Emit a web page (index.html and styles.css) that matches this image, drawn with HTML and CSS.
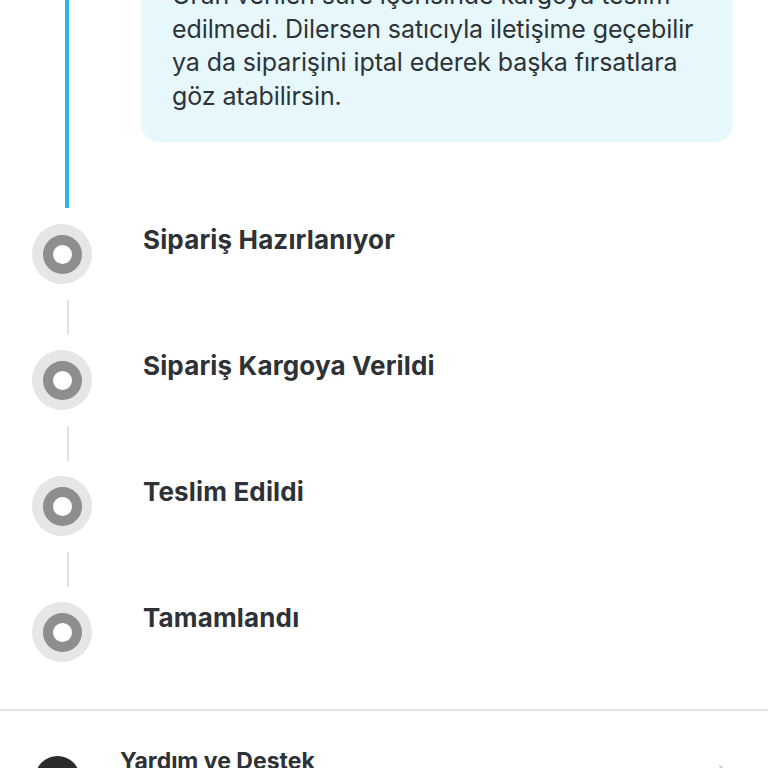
FILE: index.html
```html
<!DOCTYPE html>
<html lang="tr">
<head>
<meta charset="utf-8">
<link rel="stylesheet" href="styles.css">
</head>
<body>
<div class="page">
  <section class="active-step">
    <div class="rail"><div class="rail-line"></div></div>
    <div class="note">
      <p>Ürün verilen süre içerisinde kargoya teslim edilmedi. Dilersen satıcıyla iletişime geçebilir ya da siparişini iptal ederek başka fırsatlara göz atabilirsin.</p>
    </div>
  </section>

  <ol class="steps">
    <li class="step">
      <div class="marker"><span class="dot"></span><span class="link"></span></div>
      <div class="title">Sipariş Hazırlanıyor</div>
    </li>
    <li class="step">
      <div class="marker"><span class="dot"></span><span class="link"></span></div>
      <div class="title">Sipariş Kargoya Verildi</div>
    </li>
    <li class="step">
      <div class="marker"><span class="dot"></span><span class="link"></span></div>
      <div class="title">Teslim Edildi</div>
    </li>
    <li class="step last">
      <div class="marker"><span class="dot"></span></div>
      <div class="title">Tamamlandı</div>
    </li>
  </ol>

  <div class="divider"></div>

  <div class="help">
    <span class="help-icon"></span>
    <div class="help-title">Yardım ve Destek</div>
    <svg class="chev" width="12" height="20" viewBox="0 0 12 20"><path d="M2 2 L10 10 L2 18" fill="none" stroke="#cfcfcf" stroke-width="2" stroke-linecap="round" stroke-linejoin="round"/></svg>
  </div>
</div>
</body>
</html>
```

FILE: styles.css
```css
html, body {
  margin: 0;
  padding: 0;
  background: #ffffff;
  overflow: hidden;
}
body {
  font-family: "Inter", "Roboto", "Noto Sans", sans-serif;
  color: #2f3336;
}
.page {
  width: 768px;
  height: 768px;
  overflow: hidden;
}
.active-step {
  display: flex;
  margin-top: -39px;
}
.rail {
  width: 141px;
  flex: none;
  display: flex;
}
.rail-line {
  width: 4px;
  margin-left: 65px;
  height: 247px;
  background: #2cb7e6;
}
.note {
  width: 592px;
  height: 181px;
  box-sizing: border-box;
  background: #e6f8fc;
  border-radius: 18px;
  padding: 18px 16px 0 31px;
}
.note p {
  margin: 0;
  font-size: 25px;
  line-height: 33.5px;
  letter-spacing: -0.1px;
  color: #2e3338;
}
.steps {
  list-style: none;
  margin: 16px 0 0 0;
  padding: 0;
}
.step {
  display: flex;
  height: 126px;
}
.step.last {
  height: 107px;
}
.marker {
  width: 143px;
  flex: none;
  display: flex;
  flex-direction: column;
}
.dot {
  margin-left: 32px;
  width: 60px;
  height: 60px;
  border-radius: 50%;
  background: #e6e6e6;
  display: flex;
  align-items: center;
  justify-content: center;
}
.dot::before {
  content: "";
  width: 19px;
  height: 19px;
  border-radius: 50%;
  background: #fff;
  border: 10px solid #8e8e8e;
}
.link {
  margin-left: 67px;
  margin-top: 16px;
  width: 2px;
  height: 35px;
  background: #e2e2e2;
}
.title {
  font-size: 26px;
  font-weight: 700;
  line-height: 30px;
  letter-spacing: 0.15px;
  color: #2e3236;
  margin-top: 1px;
}
.divider {
  height: 2px;
  background: #e4e4e4;
}
.help {
  display: flex;
  align-items: flex-start;
  padding-top: 36px;
}
.help-icon {
  margin-left: 35px;
  margin-top: 9px;
  width: 45px;
  height: 45px;
  border-radius: 50%;
  background: #2b2b2b;
  flex: none;
}
.help-title {
  margin-left: 40px;
  font-size: 23px;
  font-weight: 700;
  line-height: 28px;
  color: #2e3236;
  letter-spacing: 0;
}
.chev {
  margin-left: auto;
  margin-right: 38px;
  margin-top: 17px;
}
```
